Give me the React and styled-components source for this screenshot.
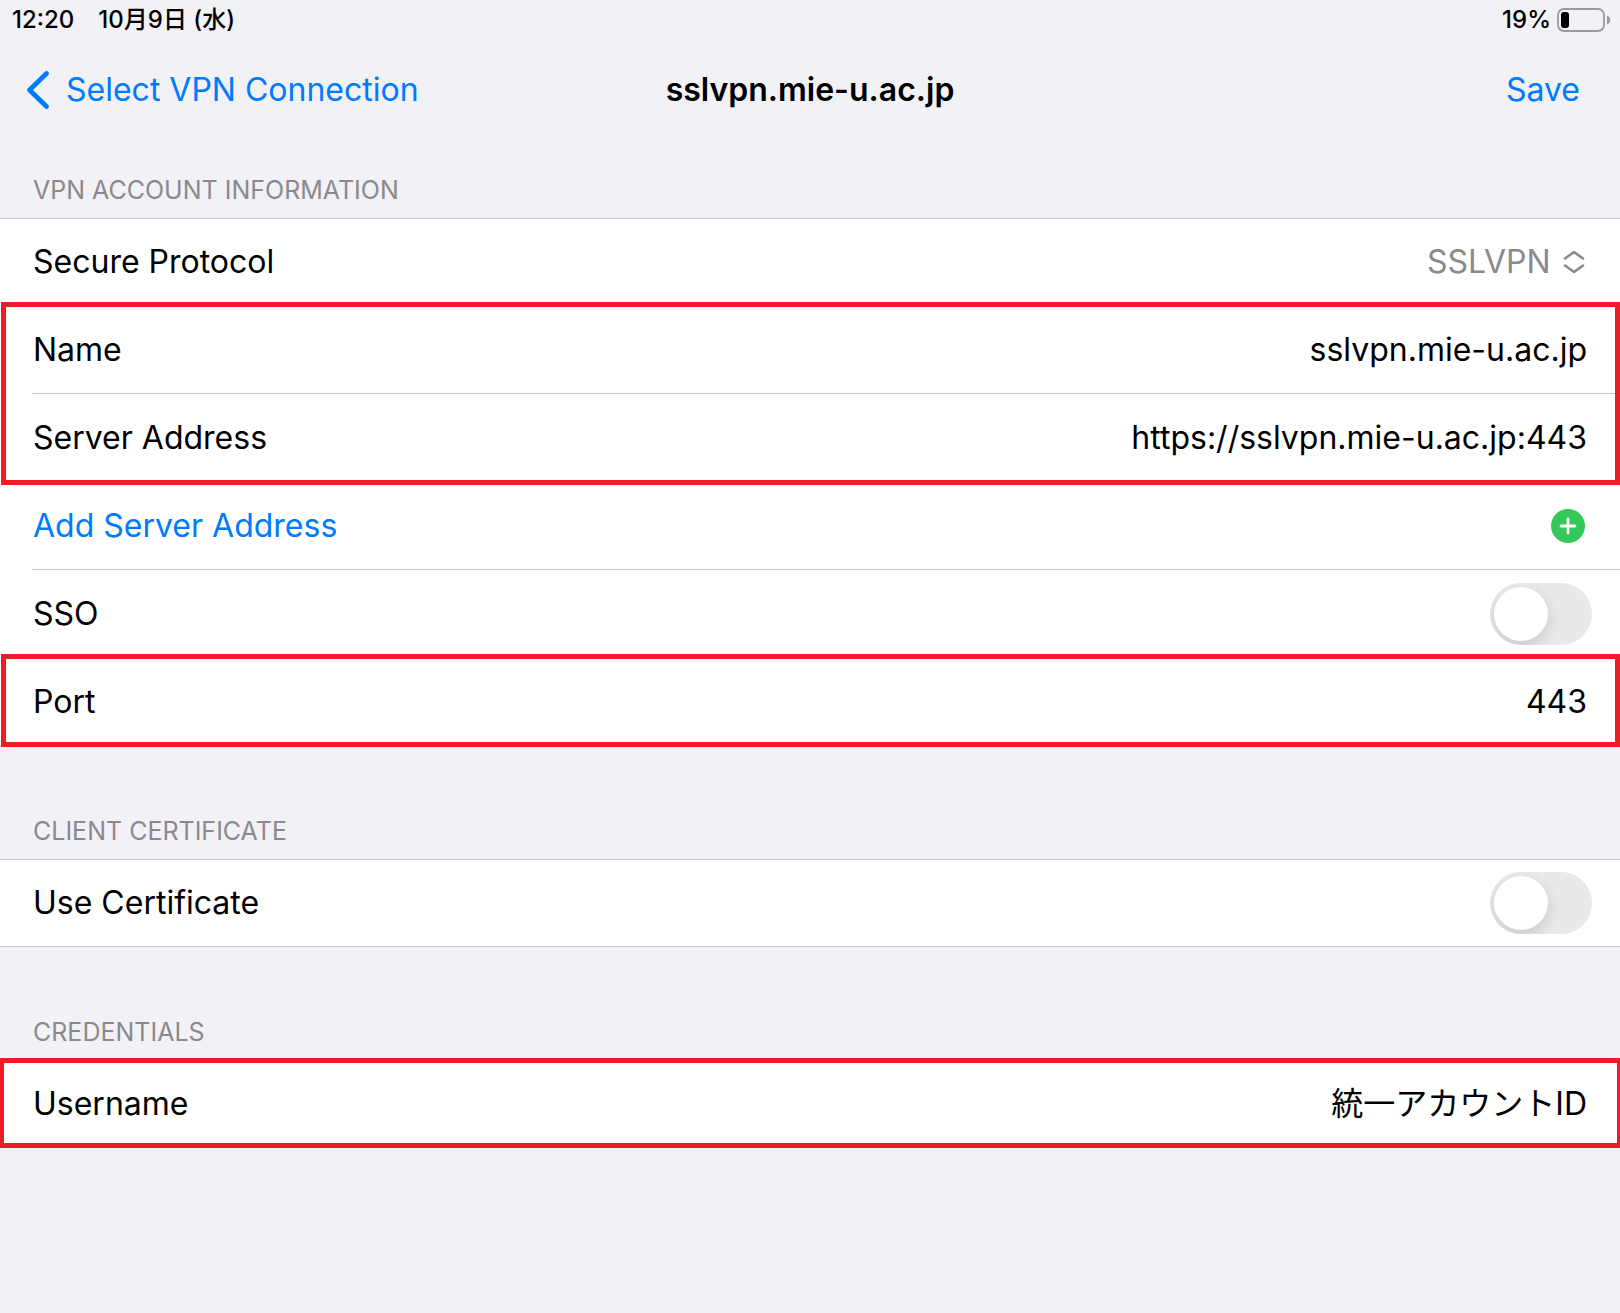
import { useState } from "react";
import styled, { createGlobalStyle } from "styled-components";

export default function App() {
  const [protocol, setProtocol] = useState("SSLVPN");
  const [name, setName] = useState("sslvpn.mie-u.ac.jp");
  const [server, setServer] = useState("https://sslvpn.mie-u.ac.jp:443");
  const [sso, setSso] = useState(false);
  const [port, setPort] = useState("443");
  const [useCertificate, setUseCertificate] = useState(false);
  const [username, setUsername] = useState("統一アカウントID");

  return (
    <>
      <GlobalStyle />
      <Page>
        <StatusBar>
          <StatusGroup $gap="24px">
            <span>12:20</span>
            <span>10月9日 (水)</span>
          </StatusGroup>
          <StatusGroup $gap="6px">
            <span>19%</span>
            <BatteryIcon />
          </StatusGroup>
        </StatusBar>

        <NavBar>
          <NavButton type="button">
            <BackIcon />
            Select VPN Connection
          </NavButton>
          <Title>sslvpn.mie-u.ac.jp</Title>
          <NavButton type="button" $end>
            Save
          </NavButton>
        </NavBar>

        <main>
          <SectionTitle $first>VPN ACCOUNT INFORMATION</SectionTitle>
          <List>
            <Row $height="87px" $end="35px">
              <label htmlFor="protocol">Secure Protocol</label>
              <SelectWrap>
                <Select
                  id="protocol"
                  value={protocol}
                  onChange={(e) => setProtocol(e.target.value)}
                >
                  <option>SSLVPN</option>
                </Select>
                <UpDownIcon />
              </SelectWrap>
            </Row>
            <Group>
              <Row>
                <label htmlFor="name">Name</label>
                <Field id="name" value={name} onChange={(e) => setName(e.target.value)} />
              </Row>
              <Row>
                <label htmlFor="server">Server Address</label>
                <Field id="server" value={server} onChange={(e) => setServer(e.target.value)} />
              </Row>
              <Highlight $inset="-4px 0 -3px 1px" />
            </Group>
            <Row $end="35px">
              <AddButton type="button">
                Add Server Address
                <PlusIcon />
              </AddButton>
            </Row>
            <Row $end="28px">
              <label htmlFor="sso">SSO</label>
              <Switch id="sso" checked={sso} onChange={(e) => setSso(e.target.checked)} />
            </Row>
            <Group>
              <Row $height="87px" $last>
                <label htmlFor="port">Port</label>
                <Field id="port" value={port} onChange={(e) => setPort(e.target.value)} />
              </Row>
              <Highlight $inset="-4px 0 -2px 1px" />
            </Group>
          </List>

          <SectionTitle>CLIENT CERTIFICATE</SectionTitle>
          <List>
            <Row $height="86px" $end="28px" $last>
              <label htmlFor="certificate">Use Certificate</label>
              <Switch
                id="certificate"
                checked={useCertificate}
                onChange={(e) => setUseCertificate(e.target.checked)}
              />
            </Row>
          </List>

          <SectionTitle>CREDENTIALS</SectionTitle>
          <List>
            <Group>
              <Row $height="86px" $last>
                <label htmlFor="username">Username</label>
                <Field
                  id="username"
                  value={username}
                  onChange={(e) => setUsername(e.target.value)}
                />
              </Row>
              <Highlight $inset="-3px -2px -1px -1px" />
            </Group>
          </List>
        </main>
      </Page>
    </>
  );
}

const BackIcon = () => (
  <svg width="24" height="40" viewBox="0 0 24 40" fill="none" aria-hidden="true">
    <path
      d="M20.500 3.500 3.500 20l17 16.500"
      stroke="currentColor"
      strokeWidth="4.800"
      strokeLinecap="round"
      strokeLinejoin="round"
    />
  </svg>
);

const BatteryIcon = () => (
  <svg width="54" height="24" viewBox="0 0 54 24" aria-hidden="true">
    <rect x="1" y="1" width="46" height="22" rx="6" fill="none" stroke="#9b9a9e" strokeWidth="1.800" />
    <rect x="4" y="4" width="8" height="16" rx="3" fill="#000" />
    <path d="M50 7.500c2 .8 3.200 2.400 3.200 4.500S52 15.700 50 16.500z" fill="#9b9a9e" />
  </svg>
);

const UpDownIcon = () => (
  <svg width="22" height="26" viewBox="0 0 22 26" fill="none" aria-hidden="true">
    <path
      d="M2 9.500 11 3l9 6.500M2 16.500 11 23l9-6.500"
      stroke="#8a8a8e"
      strokeWidth="2.600"
      strokeLinecap="round"
      strokeLinejoin="round"
    />
  </svg>
);

const PlusIcon = () => (
  <svg width="34" height="34" viewBox="0 0 34 34" fill="none" aria-hidden="true">
    <circle cx="17" cy="17" r="17" fill="#34c759" />
    <path d="M17 10v14M10 17h14" stroke="#fff" strokeWidth="2.800" strokeLinecap="round" />
  </svg>
);

const GlobalStyle = createGlobalStyle`
  * {
    box-sizing: border-box;
  }
  body {
    margin: 0;
    background: #f2f1f6;
  }
  body, button, input, select {
    font-family: Inter, "Noto Sans CJK JP", sans-serif;
  }
`;

const Page = styled.div`
  min-height: 100vh;
  overflow-x: hidden;
  color: #000;
  font-size: 32px;
  line-height: 40px;
`;

const StatusBar = styled.div`
  display: flex;
  align-items: center;
  justify-content: space-between;
  height: 40px;
  padding: 0 9px 0 12px;
  font-size: 24px;
  font-weight: 500;
`;

const StatusGroup = styled.div`
  display: flex;
  align-items: center;
  gap: ${({ $gap }) => $gap};
`;

const NavBar = styled.header`
  display: grid;
  grid-template-columns: 1fr auto 1fr;
  align-items: center;
  height: 100px;
`;

const NavButton = styled.button`
  display: flex;
  align-items: center;
  gap: 16px;
  justify-self: ${({ $end }) => ($end ? "end" : "start")};
  padding: 0 40px 0 26px;
  border: 0;
  background: none;
  color: #007aff;
  font-size: 32px;
  line-height: 40px;
  cursor: pointer;
`;

const Title = styled.h1`
  margin: 0;
  font-size: 32px;
  font-weight: 600;
`;

const SectionTitle = styled.h2`
  margin: 0;
  padding: ${({ $first }) => ($first ? "34px" : "69px")} 33px 12px;
  color: #8a8a8e;
  font-size: 25px;
  font-weight: 400;
  line-height: 32px;
`;

const List = styled.div`
  background: #fff;
  border-top: 1px solid #c6c6c8;
  border-bottom: 1px solid #c6c6c8;
`;

const Group = styled.div`
  position: relative;
`;

const Row = styled.div`
  display: flex;
  align-items: center;
  justify-content: space-between;
  height: ${({ $height }) => $height || "88px"};
  margin-left: 32px;
  padding-left: 1px;
  padding-right: ${({ $end }) => $end || "33px"};
  border-bottom: ${({ $last }) => ($last ? "0" : "1px solid #c6c6c8")};
`;

const Highlight = styled.div`
  position: absolute;
  inset: ${({ $inset }) => $inset};
  border: 5px solid #ee1c24;
  pointer-events: none;
`;

const Field = styled.input`
  flex: 1;
  min-width: 0;
  padding: 0;
  border: 0;
  outline: 0;
  background: none;
  color: #000;
  font-size: 32px;
  line-height: 40px;
  text-align: right;
`;

const SelectWrap = styled.div`
  display: flex;
  align-items: center;
  gap: 12px;
`;

const Select = styled.select`
  appearance: none;
  padding: 0;
  border: 0;
  background: none;
  color: #8a8a8e;
  font-size: 32px;
  line-height: 40px;
`;

const AddButton = styled.button`
  display: flex;
  align-items: center;
  justify-content: space-between;
  flex: 1;
  padding: 0;
  border: 0;
  background: none;
  color: #007aff;
  font-size: 32px;
  line-height: 40px;
  cursor: pointer;
`;

const Switch = styled.input.attrs({ type: "checkbox", role: "switch" })`
  appearance: none;
  width: 102px;
  height: 62px;
  margin: 0;
  padding: 4px;
  border-radius: 31px;
  background: ${({ checked }) => (checked ? "#34c759" : "#e9e9eb")};
  overflow: hidden;
  cursor: pointer;

  &::before {
    content: "";
    display: block;
    width: 54px;
    height: 54px;
    margin-left: ${({ checked }) => (checked ? "40px" : "0")};
    border-radius: 50%;
    background: #fff;
    box-shadow: 0 6px 16px rgba(0, 0, 0, 0.14);
  }
`;
